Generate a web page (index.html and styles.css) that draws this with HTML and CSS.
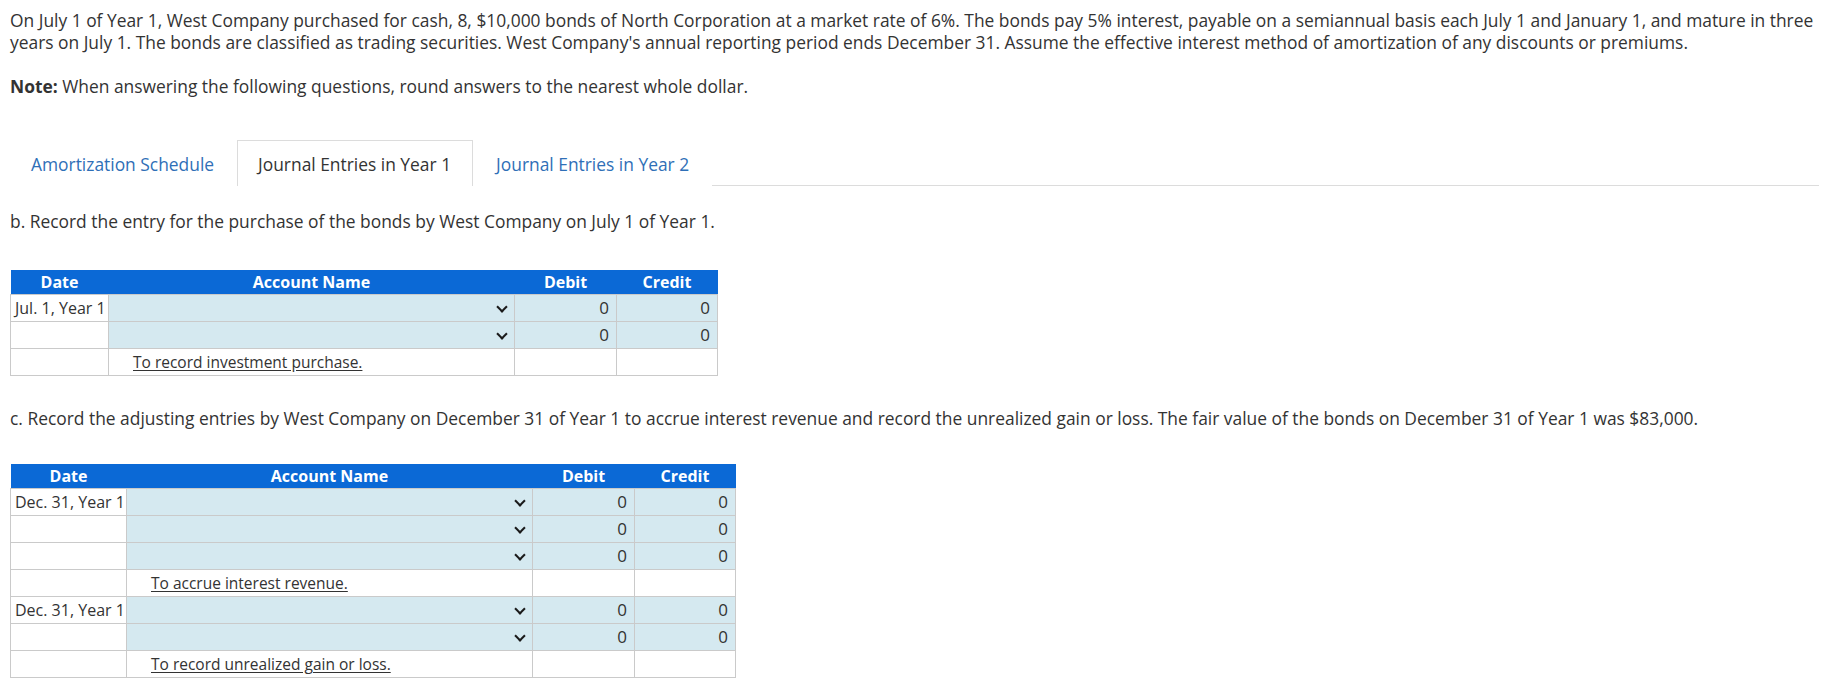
FILE: index.html
```html
<!DOCTYPE html>
<html lang="en">
<head>
<meta charset="utf-8">
<title>Bond Investment Journal Entries</title>
<link rel="stylesheet" href="styles.css">
</head>
<body>
<div class="page">
  <p class="intro">On July 1 of Year 1, West Company purchased for cash, 8, $10,000 bonds of North Corporation at a market rate of 6%. The bonds pay 5% interest, payable on a semiannual basis each July 1 and January 1, and mature in three years on July 1. The bonds are classified as trading securities. West Company's annual reporting period ends December 31. Assume the effective interest method of amortization of any discounts or premiums.</p>
  <p class="note"><strong>Note:</strong> When answering the following questions, round answers to the nearest whole dollar.</p>

  <div class="tabs">
    <div class="tab">Amortization Schedule</div>
    <div class="tab active">Journal Entries in Year 1</div>
    <div class="tab">Journal Entries in Year 2</div>
  </div>

  <p class="question q-b">b. Record the entry for the purchase of the bonds by West Company on July 1 of Year 1.</p>

  <table class="journal">
    <colgroup>
      <col class="c-date-a"><col class="c-acct"><col class="c-num-a"><col class="c-num-b">
    </colgroup>
    <thead>
      <tr><th>Date</th><th>Account Name</th><th>Debit</th><th>Credit</th></tr>
    </thead>
    <tbody>
      <tr class="entry"><td class="date">Jul. 1, Year 1</td><td class="acct"><span class="chev"></span></td><td class="num">0</td><td class="num">0</td></tr>
      <tr class="entry"><td class="date"></td><td class="acct"><span class="chev"></span></td><td class="num">0</td><td class="num">0</td></tr>
      <tr class="memo-row"><td class="date"></td><td class="memo"><span>To record investment purchase.</span></td><td></td><td></td></tr>
    </tbody>
  </table>

  <p class="question q-c">c. Record the adjusting entries by West Company on December 31 of Year 1 to accrue interest revenue and record the unrealized gain or loss. The fair value of the bonds on December 31 of Year 1 was $83,000.</p>

  <table class="journal">
    <colgroup>
      <col class="c-date-b"><col class="c-acct"><col class="c-num-a"><col class="c-num-b">
    </colgroup>
    <thead>
      <tr><th>Date</th><th>Account Name</th><th>Debit</th><th>Credit</th></tr>
    </thead>
    <tbody>
      <tr class="entry"><td class="date">Dec. 31, Year 1</td><td class="acct"><span class="chev"></span></td><td class="num">0</td><td class="num">0</td></tr>
      <tr class="entry"><td class="date"></td><td class="acct"><span class="chev"></span></td><td class="num">0</td><td class="num">0</td></tr>
      <tr class="entry"><td class="date"></td><td class="acct"><span class="chev"></span></td><td class="num">0</td><td class="num">0</td></tr>
      <tr class="memo-row"><td class="date"></td><td class="memo"><span>To accrue interest revenue.</span></td><td></td><td></td></tr>
      <tr class="entry"><td class="date">Dec. 31, Year 1</td><td class="acct"><span class="chev"></span></td><td class="num">0</td><td class="num">0</td></tr>
      <tr class="entry"><td class="date"></td><td class="acct"><span class="chev"></span></td><td class="num">0</td><td class="num">0</td></tr>
      <tr class="memo-row"><td class="date"></td><td class="memo"><span>To record unrealized gain or loss.</span></td><td></td><td></td></tr>
    </tbody>
  </table>
</div>
</body>
</html>
```

FILE: styles.css
```css
html, body {
  margin: 0;
  padding: 0;
  background: #ffffff;
}

body {
  font-family: "Open Sans", "Liberation Sans", sans-serif;
  font-size: 17.4px;
  color: #333333;
}

.page {
  padding: 9px 6px 0 10px;
}

p {
  margin: 0;
}

.intro {
  line-height: 22px;
}

.note {
  line-height: 22px;
  margin-top: 22px;
}

.note strong {
  font-weight: 700;
}

.tabs {
  display: flex;
  margin-top: 43px;
  margin-left: -2px;
  border-bottom: 1px solid #dcdcdc;
  height: 46px;
  box-sizing: border-box;
}

.tab {
  display: flex;
  align-items: center;
  padding: 0 22px;
  color: #2f6fb7;
  border: 1px solid transparent;
  border-bottom: none;
  margin-bottom: -1px;
  background: #fff;
}

.tab.active {
  color: #333333;
  border-color: #dcdcdc;
  padding: 0 21px 0 20px;
}

.question {
  line-height: 22px;
}

.q-b {
  margin-top: 24px;
}

.q-c {
  margin-top: 31px;
}

.journal {
  border-collapse: collapse;
  table-layout: fixed;
  margin-top: 38px;
  font-size: 16px;
}

.q-c + .journal {
  margin-top: 35px;
}

.c-date-a { width: 98px; }
.c-date-b { width: 116px; }
.c-acct { width: 406px; }
.c-num-a { width: 102px; }
.c-num-b { width: 101px; }

.journal th {
  background: #0b69d6;
  color: #ffffff;
  font-weight: 700;
  font-size: 16px;
  height: 24px;
  padding: 0;
  text-align: center;
  line-height: 24px;
}

.journal td {
  border: 1px solid #cacaca;
  height: 26px;
  padding: 0;
  line-height: 20px;
  white-space: nowrap;
}

.journal tr.entry td {
  background: #d5e9f0;
}

.journal tr.entry td.date,
.journal tr.memo-row td {
  background: #ffffff;
}

.journal td.date {
  padding-left: 4px;
  color: #333333;
}

.journal td.acct {
  text-align: right;
  padding-right: 8px;
}

.chev {
  display: inline-block;
  width: 6px;
  height: 6px;
  border-right: 2px solid #1a1a1a;
  border-bottom: 2px solid #1a1a1a;
  transform: rotate(45deg);
  position: relative;
  top: -3px;
}

.journal td.num {
  text-align: right;
  padding-right: 7px;
  color: #333333;
  font-size: 17px;
}

.journal td.memo {
  padding-left: 24px;
  font-size: 15.5px;
}

.journal td.memo span {
  text-decoration: underline;
  text-underline-offset: 2px;
  color: #333333;
}
```
